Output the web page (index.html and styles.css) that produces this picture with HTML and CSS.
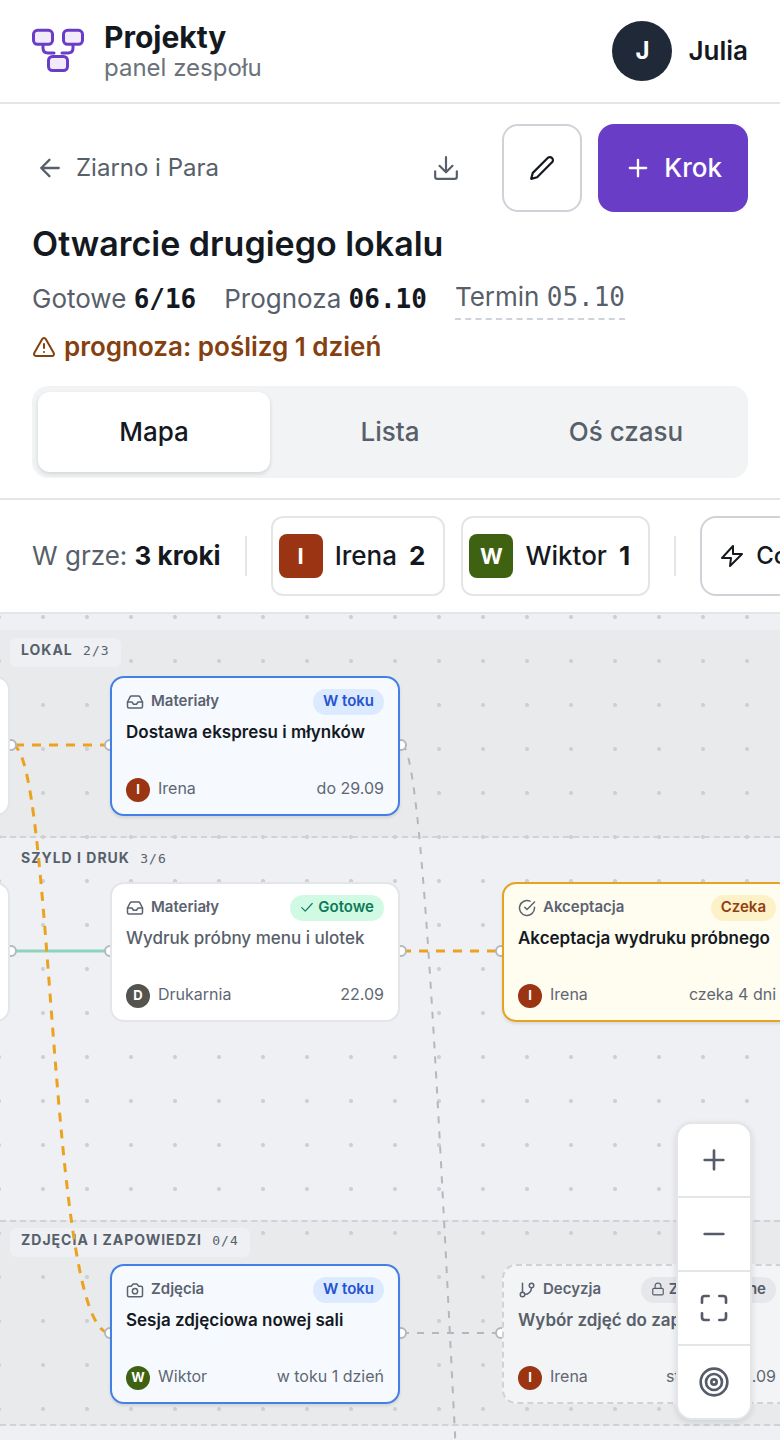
FILE: index.html
```html
<!DOCTYPE html>
<html lang="pl">
<head>
<meta charset="utf-8">
<meta name="viewport" content="width=device-width, initial-scale=1">
<title>Projekty – Otwarcie drugiego lokalu</title>
<link rel="stylesheet" href="styles.css">
</head>
<body>
<svg class="sprite" aria-hidden="true">
  <symbol id="i-inbox" viewBox="0 0 24 24"><path d="M22 12h-6l-2 3h-4l-2-3H2"/><path d="M5.45 5.11 2 12v6a2 2 0 0 0 2 2h16a2 2 0 0 0 2-2v-6l-3.45-6.89A2 2 0 0 0 16.76 4H7.24a2 2 0 0 0-1.79 1.11z"/></symbol>
  <symbol id="i-plus" viewBox="0 0 24 24"><path d="M5 12h14M12 5v14"/></symbol>
</svg>

<header class="topbar">
  <div class="brand">
    <svg class="brand__logo" viewBox="0 0 52 46" aria-hidden="true">
      <path d="M11 16v4q0 5 5 5h6M41 16v4q0 5-5 5h-6" fill="none"/>
      <rect x="1.500" y="2.300" width="19" height="14" rx="4"/>
      <rect x="31.500" y="2.300" width="19" height="14" rx="4"/>
      <rect x="16.500" y="28.500" width="19" height="14" rx="4"/>
    </svg>
    <div class="brand__text">
      <span class="brand__name">Projekty</span>
      <span class="brand__sub">panel zespołu</span>
    </div>
  </div>
  <div class="user"><span class="user__avatar">J</span><span class="user__name">Julia</span></div>
</header>

<section class="project">
  <div class="project__bar">
    <a class="back" href="#"><svg class="icon icon--28" viewBox="0 0 24 24" aria-hidden="true"><path d="M19.500 12h-15M11.500 5l-7 7 7 7"/></svg>Ziarno i Para</a>
    <div class="actions">
      <button class="btn btn--ghost" type="button" aria-label="Pobierz"><svg class="icon icon--26" viewBox="0 0 24 24" aria-hidden="true"><path d="M12 2v14M6 10l6 6 6-6M2 15v5a2 2 0 0 0 2 2h16a2 2 0 0 0 2-2v-5"/></svg></button>
      <button class="btn btn--outline" type="button" aria-label="Edytuj"><svg class="icon icon--26" viewBox="0 0 24 24" aria-hidden="true"><path d="M17 3a2.850 2.850 0 1 1 4 4L7.500 20.500 2 22l1.500-5.500z"/></svg></button>
      <button class="btn btn--primary" type="button"><svg class="icon icon--28" aria-hidden="true"><use href="#i-plus"/></svg>Krok</button>
    </div>
  </div>
  <h1 class="project__title">Otwarcie drugiego lokalu</h1>
  <div class="meta">
    <span>Gotowe <b class="mono">6/16</b></span>
    <span>Prognoza <b class="mono">06.10</b></span>
    <button class="meta__due" type="button">Termin <span class="mono">05.10</span></button>
  </div>
  <p class="warning"><svg class="icon icon--24" viewBox="0 0 24 24" aria-hidden="true"><path d="m21.730 18-8-14a2 2 0 0 0-3.480 0l-8 14A2 2 0 0 0 4 21h16a2 2 0 0 0 1.730-3M12 9v4M12 17h.01"/></svg>prognoza: poślizg 1 dzień</p>
  <div class="tabs" role="tablist">
    <button class="tab tab--active" type="button" role="tab" aria-selected="true">Mapa</button>
    <button class="tab" type="button" role="tab" aria-selected="false">Lista</button>
    <button class="tab" type="button" role="tab" aria-selected="false">Oś czasu</button>
  </div>
</section>

<div class="filters">
  <span class="filters__summary">W grze: <b>3 kroki</b></span>
  <span class="filters__sep"></span>
  <div class="filters__people">
    <button class="chip" type="button"><span class="chip__mark chip__mark--irena">I</span>Irena <b>2</b></button>
    <button class="chip" type="button"><span class="chip__mark chip__mark--wiktor">W</span>Wiktor <b>1</b></button>
  </div>
  <span class="filters__sep"></span>
  <button class="whatif" type="button"><svg class="icon icon--24" viewBox="0 0 24 24" aria-hidden="true"><path d="M13 2 2 14h9l-1 8L22 10h-9z"/></svg>Co teraz</button>
</div>

<main class="map">
  <div class="lane lane--shaded lane--a"></div>
  <div class="lane lane--shaded lane--c"></div>
  <div class="map__grid"></div>
  <h2 class="lane-label lane-label--a">LOKAL <span>2/3</span></h2>
  <h2 class="lane-label lane-label--b">SZYLD I DRUK <span>3/6</span></h2>
  <h2 class="lane-label lane-label--c">ZDJĘCIA I ZAPOWIEDZI <span>0/4</span></h2>

  <svg class="edges" aria-hidden="true">
    <path class="edge edge--idle" d="M402 131C438 131 465 1377 502 1377"/>
    <path class="edge edge--idle" d="M402 719H502"/>
    <path class="edge edge--done" d="M12 337H110"/>
    <path class="edge edge--active" d="M15 131H110"/>
    <path class="edge edge--active" d="M402 337H502"/>
    <path class="edge edge--active" d="M12 131C54 131 48 719 110 719"/>
    <g class="ports">
      <circle cx="11" cy="131" r="5"/><circle cx="110" cy="131" r="5"/><circle cx="401" cy="131" r="5"/>
      <circle cx="11" cy="337" r="5"/><circle cx="110" cy="337" r="5"/><circle cx="401" cy="337" r="5"/><circle cx="501" cy="337" r="5"/>
      <circle cx="110" cy="719" r="5"/><circle cx="401" cy="719" r="5"/><circle cx="501" cy="719" r="5"/>
    </g>
  </svg>

  <article class="card card--col0 card--row1"></article>
  <article class="card card--col0 card--row2"></article>

  <article class="card card--col1 card--row1 card--progress">
    <div class="card__head"><svg class="icon icon--18" aria-hidden="true"><use href="#i-inbox"/></svg><span class="card__kind">Materiały</span><span class="pill pill--progress">W toku</span></div>
    <h3 class="card__title">Dostawa ekspresu i młynków</h3>
    <div class="card__foot"><span class="dot dot--irena">I</span>Irena<span class="card__time">do 29.09</span></div>
  </article>

  <article class="card card--col1 card--row2 card--done">
    <div class="card__head"><svg class="icon icon--18" aria-hidden="true"><use href="#i-inbox"/></svg><span class="card__kind">Materiały</span><span class="pill pill--done"><svg class="icon icon--14" viewBox="0 0 24 24" aria-hidden="true"><path d="M21 6 9 19l-6-6"/></svg>Gotowe</span></div>
    <h3 class="card__title">Wydruk próbny menu i ulotek</h3>
    <div class="card__foot"><span class="dot dot--druk">D</span>Drukarnia<span class="card__time">22.09</span></div>
  </article>

  <article class="card card--col2 card--row2 card--waiting">
    <div class="card__head"><svg class="icon icon--18" viewBox="0 0 24 24" aria-hidden="true"><path d="M22 11.080V12a10 10 0 1 1-5.930-9.140M22 4 12 14.010l-3-3"/></svg><span class="card__kind">Akceptacja</span><span class="pill pill--waiting">Czeka</span></div>
    <h3 class="card__title">Akceptacja wydruku próbnego</h3>
    <div class="card__foot"><span class="dot dot--irena">I</span>Irena<span class="card__time">czeka 4 dni</span></div>
  </article>

  <article class="card card--col1 card--row3 card--progress">
    <div class="card__head"><svg class="icon icon--18" viewBox="0 0 24 24" aria-hidden="true"><path d="M14.500 4h-5L7 7H4a2 2 0 0 0-2 2v10a2 2 0 0 0 2 2h16a2 2 0 0 0 2-2V9a2 2 0 0 0-2-2h-3z"/><circle cx="12" cy="13.500" r="3.500"/></svg><span class="card__kind">Zdjęcia</span><span class="pill pill--progress">W toku</span></div>
    <h3 class="card__title">Sesja zdjęciowa nowej sali</h3>
    <div class="card__foot"><span class="dot dot--wiktor">W</span>Wiktor<span class="card__time">w toku 1 dzień</span></div>
  </article>

  <article class="card card--col2 card--row3 card--locked">
    <div class="card__head"><svg class="icon icon--18" viewBox="0 0 24 24" aria-hidden="true"><path d="M6 3v12M18 9a9 9 0 0 1-9 9"/><circle cx="18" cy="6" r="3"/><circle cx="6" cy="18" r="3"/></svg><span class="card__kind">Decyzja</span><span class="pill pill--locked"><svg class="icon icon--14" viewBox="0 0 24 24" aria-hidden="true"><rect x="3" y="11" width="18" height="11" rx="2"/><path d="M7 11V7a5 5 0 0 1 10 0v4"/></svg>Zablokowane</span></div>
    <h3 class="card__title">Wybór zdjęć do zapowiedzi</h3>
    <div class="card__foot"><span class="dot dot--irena">I</span>Irena<span class="card__time">start ok. 30.09</span></div>
  </article>

  <div class="zoom">
    <button type="button" aria-label="Przybliż"><svg class="icon icon--32" aria-hidden="true"><use href="#i-plus"/></svg></button>
    <button type="button" aria-label="Oddal"><svg class="icon icon--32" viewBox="0 0 24 24" aria-hidden="true"><path d="M5 12h14"/></svg></button>
    <button type="button" aria-label="Dopasuj"><svg class="icon icon--32" viewBox="0 0 24 24" aria-hidden="true"><path d="M8 3H5a2 2 0 0 0-2 2v3M16 3h3a2 2 0 0 1 2 2v3M21 16v3a2 2 0 0 1-2 2h-3M3 16v3a2 2 0 0 0 2 2h3"/></svg></button>
    <button type="button" aria-label="Wyśrodkuj"><svg class="icon icon--32" viewBox="0 0 24 24" aria-hidden="true"><circle cx="12" cy="12" r="10"/><circle cx="12" cy="12" r="6"/><circle cx="12" cy="12" r="2"/></svg></button>
  </div>
</main>
</body>
</html>
```

FILE: styles.css
```css
:root {
  --ink: #14191f;
  --muted: #57606a;
  --line: #e3e5e7;
  --line-strong: #cfd3d8;
  --accent: #6a3dc6;
  --irena: #9a3412;
  --wiktor: #3f6212;
}

* { box-sizing: border-box; }

body {
  margin: 0;
  min-height: 100vh;
  display: flex;
  flex-direction: column;
  background: #fff;
  color: var(--ink);
  font-family: Inter, "Liberation Sans", sans-serif;
  font-size: 26px;
  line-height: 38px;
}

button {
  font: inherit;
  color: inherit;
  margin: 0;
  padding: 0;
  border: 0;
  background: none;
}

h1, h2, h3, p { margin: 0; }

b { font-weight: 600; }

.sprite { display: none; }

.mono { font-family: "DejaVu Sans Mono", monospace; }

.icon {
  flex: none;
  fill: none;
  stroke: currentColor;
  stroke-width: 2;
  stroke-linecap: round;
  stroke-linejoin: round;
}
.icon--14 { width: 14px; height: 14px; }
.icon--18 { width: 18px; height: 18px; }
.icon--24 { width: 24px; height: 24px; }
.icon--26 { width: 26px; height: 26px; }
.icon--28 { width: 28px; height: 28px; }
.icon--32 { width: 32px; height: 32px; }

/* Top bar */
.topbar {
  display: flex;
  align-items: center;
  justify-content: space-between;
  padding: 20px 32px;
  border-bottom: 2px solid var(--line);
}
.brand { display: flex; align-items: center; gap: 20px; }
.brand__logo {
  width: 52px;
  height: 46px;
  fill: #f1ebfc;
  stroke: var(--accent);
  stroke-width: 3;
  stroke-linecap: round;
}
.brand__text { display: flex; flex-direction: column; }
.brand__name { font-size: 30px; line-height: 34px; font-weight: 700; }
.brand__sub { font-size: 24px; line-height: 28px; color: #6b727b; }
.user { display: flex; align-items: center; gap: 16px; font-weight: 600; }
.user__avatar {
  width: 60px;
  height: 60px;
  border-radius: 50%;
  display: grid;
  place-items: center;
  background: #1f2937;
  color: #fff;
  font-size: 24px;
  font-weight: 700;
}

/* Project header */
.project {
  padding: 20px 32px;
  border-bottom: 2px solid var(--line);
}
.project__bar { display: flex; align-items: center; justify-content: space-between; }
.back {
  display: flex;
  align-items: center;
  gap: 12px;
  padding-left: 4px;
  color: var(--muted);
  font-size: 24px;
  text-decoration: none;
}
.actions { display: flex; gap: 16px; }
.btn {
  display: flex;
  align-items: center;
  justify-content: center;
  gap: 12px;
  min-width: 80px;
  height: 88px;
  border-radius: 16px;
  font-weight: 500;
}
.btn--ghost { color: var(--muted); }
.btn--outline { border: 2px solid var(--line-strong); }
.btn--primary { padding: 0 26px; background: var(--accent); color: #fff; }
.project__title { margin-top: 12px; font-size: 34px; line-height: 40px; font-weight: 600; }
.meta {
  display: flex;
  flex-wrap: wrap;
  align-items: flex-start;
  gap: 0 28px;
  margin-top: 16px;
  color: var(--muted);
}
.meta b { color: var(--ink); }
.meta__due {
  padding-bottom: 4px;
  line-height: 34px;
  border-bottom: 2px dashed var(--line-strong);
}
.warning {
  display: flex;
  align-items: center;
  gap: 8px;
  margin-top: 8px;
  color: #85400f;
  font-weight: 600;
}
.tabs {
  display: grid;
  grid-template-columns: repeat(3, 1fr);
  gap: 4px;
  margin-top: 20px;
  padding: 6px;
  border-radius: 16px;
  background: #f1f3f4;
}
.tab { height: 80px; border-radius: 12px; color: var(--muted); font-weight: 500; }
.tab--active { background: #fff; color: var(--ink); box-shadow: 0 2px 4px rgba(20, 25, 31, .14); }

/* People filter */
.filters {
  display: flex;
  align-items: center;
  gap: 24px;
  padding: 16px 32px;
  overflow: hidden;
  white-space: nowrap;
  border-bottom: 2px solid var(--line);
}
.filters > * { flex: none; }
.filters__summary { color: var(--muted); }
.filters__summary b { color: var(--ink); }
.filters b { font-weight: 700; }
.filters__sep { width: 2px; height: 40px; background: var(--line); }
.filters__people { display: flex; gap: 16px; }
.chip {
  display: flex;
  align-items: center;
  gap: 12px;
  height: 80px;
  padding: 0 18px 0 6px;
  border: 2px solid var(--line);
  border-radius: 12px;
  font-weight: 500;
}
.chip__mark {
  display: grid;
  place-items: center;
  width: 44px;
  height: 44px;
  border-radius: 8px;
  color: #fff;
  font-size: 22px;
  font-weight: 700;
}
.chip__mark--irena, .dot--irena { background: var(--irena); }
.chip__mark--wiktor, .dot--wiktor { background: var(--wiktor); }
.whatif {
  display: flex;
  align-items: center;
  gap: 12px;
  height: 80px;
  padding: 0 18px;
  border: 2px solid var(--line-strong);
  border-radius: 16px;
  font-size: 24px;
  font-weight: 500;
}

/* Map canvas */
.map {
  position: relative;
  flex: 1;
  min-height: 820px;
  overflow: hidden;
  background: #eef0f4;
}
.lane { position: absolute; left: 0; right: 0; }
.lane--shaded { background: #e8eaec; border-bottom: 2px dashed #cfd2d6; }
.lane--a { top: 16px; height: 208px; }
.lane--c { top: 606px; height: 206px; border-top: 2px dashed #cfd2d6; }
.map__grid {
  position: absolute;
  inset: 0;
  background-image: radial-gradient(circle, #cdd0d5 0 1.600px, transparent 2.400px);
  background-size: 44px 44px;
  background-position: 21px -19px;
}
.lane-label {
  position: absolute;
  left: 10px;
  padding: 3px 11px 7px;
  border-radius: 6px;
  background: #eef0f4;
  color: var(--muted);
  font-size: 14px;
  line-height: 18px;
  font-weight: 700;
  letter-spacing: 1px;
  white-space: nowrap;
}
.lane-label span {
  margin-left: 6px;
  font-family: "DejaVu Sans Mono", monospace;
  font-size: 13px;
  font-weight: 400;
}
.lane-label--a { top: 24px; }
.lane-label--b { top: 232px; }
.lane-label--c { top: 614px; }

.edges { position: absolute; inset: 0; width: 100%; height: 100%; }
.edge { fill: none; stroke-width: 2; }
.edge--idle { stroke: #b4b8be; stroke-dasharray: 7 8; }
.edge--done { stroke: #8fd3bc; stroke-width: 3; }
.edge--active { stroke: #eba31f; stroke-width: 3; stroke-dasharray: 9 8; }
.ports { fill: #fff; stroke: #b4b8be; stroke-width: 2; }

.card {
  position: absolute;
  display: flex;
  flex-direction: column;
  width: 290px;
  height: 140px;
  padding: 11px 14px 12px;
  border: 2px solid #e3e5e8;
  border-radius: 14px;
  background: #fff;
  box-shadow: 0 2px 3px rgba(20, 25, 31, .1);
  white-space: nowrap;
}
.card--col0 { left: -280px; box-shadow: none; }
.card--col1 { left: 110px; }
.card--col2 { left: 502px; }
.card--row1 { top: 62px; }
.card--row2 { top: 268px; }
.card--row3 { top: 650px; }
.card--progress { border-color: #4380e6; background: #f6faff; }
.card--done { box-shadow: none; }
.card--done .card__title { color: var(--muted); font-weight: 500; }
.card--waiting { border-color: #e6a321; background: #fffcf0; }
.card--locked { border-style: dashed; border-color: #cfd3d7; background: #f3f4f6; box-shadow: none; }
.card--locked .card__title { color: var(--muted); }
.card__head { display: flex; align-items: center; gap: 7px; color: #5b6270; }
.card__kind { padding-bottom: 2px; font-size: 15px; line-height: 22px; font-weight: 600; }
.card__title { margin-top: 5px; font-size: 17px; line-height: 24px; font-weight: 600; }
.card__foot {
  display: flex;
  align-items: flex-start;
  gap: 8px;
  margin-top: auto;
  color: #606773;
  font-size: 16px;
  line-height: 20px;
}
.card__time { margin-left: auto; }
.pill {
  display: flex;
  align-items: center;
  gap: 4px;
  margin-left: auto;
  padding: 1px 10px 3px;
  border-radius: 13px;
  font-size: 15px;
  line-height: 22px;
  font-weight: 600;
}
.pill--progress { background: #dbeafe; color: #2653d0; }
.pill--done { background: #d1fae5; color: #0b7a55; }
.pill--waiting { background: #fdf1c8; color: #8f4010; }
.pill--locked { background: #e5e7eb; color: #565d69; }
.dot {
  width: 24px;
  height: 24px;
  border-radius: 50%;
  color: #fff;
  font-size: 13px;
  line-height: 22px;
  font-weight: 700;
  text-align: center;
}
.dot--druk { background: #55534e; }

.zoom {
  position: absolute;
  right: 28px;
  bottom: 20px;
  display: flex;
  flex-direction: column;
  border: 2px solid var(--line);
  border-radius: 16px;
  background: #fff;
  color: #555b68;
  overflow: hidden;
  box-shadow: 0 2px 6px rgba(20, 25, 31, .12);
}
.zoom button { display: grid; place-items: center; width: 72px; height: 72px; }
.zoom button + button { box-sizing: content-box; border-top: 2px solid var(--line); }
```
